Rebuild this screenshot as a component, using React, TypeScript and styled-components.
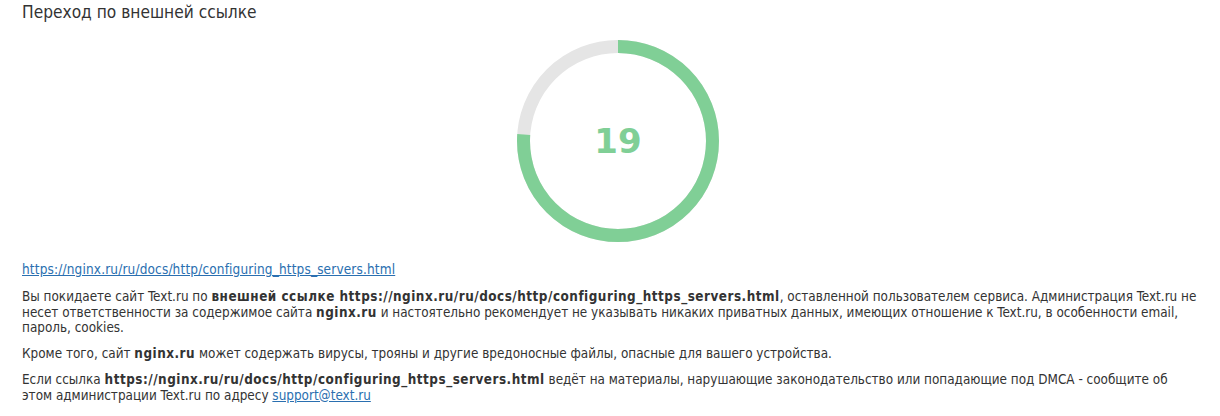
import React from "react";
import styled, { createGlobalStyle } from "styled-components";

const Global = createGlobalStyle`
  html, body { margin: 0; padding: 0; background: #fff; }
  body { font-family: "DejaVu Sans Condensed", "DejaVu Sans", sans-serif; color: #333; }
`;

const Page = styled.div`
  padding: 0 6px 0 22px;
  width: 1220px;
  box-sizing: border-box;
`;

const Title = styled.h1`
  margin: 0;
  padding-top: 2px;
  font-family: "DejaVu Sans Condensed", "DejaVu Sans", sans-serif;
  font-weight: normal;
  font-size: 17.2px;
  line-height: 20px;
  color: #333;
`;

const ChartWrap = styled.div`
  display: flex;
  justify-content: center;
  margin-top: 18px;
`;

const Chart = styled.div`
  position: relative;
  width: 202px;
  height: 202px;
`;

const Score = styled.div`
  position: absolute;
  inset: 0;
  display: flex;
  align-items: center;
  justify-content: center;
  font-family: "DejaVu Sans", sans-serif;
  font-weight: bold;
  font-size: 34px;
  color: #80cf96;
`;

const Link = styled.a`
  display: block;
  margin-top: 19px;
  font-size: 13.5px;
  letter-spacing: 0.15px;
  line-height: 16px;
  color: #2a6fb0;
  text-decoration: underline;
`;

const Para = styled.p<{ $gap: number }>`
  margin: ${(p) => p.$gap}px 0 0;
  font-size: 13.4px;
  line-height: 15.5px;
  color: #333;
  b { font-weight: bold; letter-spacing: 0.5px; }
`;

const Mail = styled.a`
  color: #2a6fb0;
  text-decoration: underline;
`;

const url = "https://nginx.ru/ru/docs/http/configuring_https_servers.html";

function Ring({ percent }: { percent: number }) {
  const r = 94.5;
  const c = 2 * Math.PI * r;
  return (
    <svg width="202" height="202" viewBox="0 0 202 202">
      <circle cx="101" cy="101" r={r} fill="none" stroke="#e5e5e5" strokeWidth="13" />
      <circle
        cx="101"
        cy="101"
        r={r}
        fill="none"
        stroke="#80cf96"
        strokeWidth="13"
        strokeDasharray={`${(c * percent) / 100} ${c}`}
        transform="rotate(-90 101 101)"
      />
    </svg>
  );
}

export default function App() {
  return (
    <Page>
      <Global />
      <Title>Переход по внешней ссылке</Title>
      <ChartWrap>
        <Chart>
          <Ring percent={76} />
          <Score>19</Score>
        </Chart>
      </ChartWrap>
      <Link href="#">{url}</Link>
      <Para $gap={12}>
        Вы покидаете сайт Text.ru по <b>внешней ссылке {url}</b>, оставленной пользователем сервиса. Администрация Text.ru не несет ответственности за содержимое сайта <b>nginx.ru</b> и настоятельно рекомендует не указывать никаких приватных данных, имеющих отношение к Text.ru, в особенности email, пароль, cookies.
      </Para>
      <Para $gap={10.5}>
        Кроме того, сайт <b>nginx.ru</b> может содержать вирусы, трояны и другие вредоносные файлы, опасные для вашего устройства.
      </Para>
      <Para $gap={10.5}>
        Если ссылка <b>{url}</b> ведёт на материалы, нарушающие законодательство или попадающие под DMCA - сообщите об
        <br />
        этом администрации Text.ru по адресу <Mail href="#">support@text.ru</Mail>
      </Para>
    </Page>
  );
}
